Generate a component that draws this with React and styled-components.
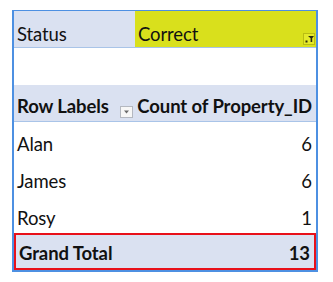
import React from 'react';
import styled, { createGlobalStyle } from 'styled-components';

const GlobalStyle = createGlobalStyle`
  body {
    margin: 0;
    background: #ffffff;
    font-family: Lato, "Liberation Sans", sans-serif;
  }
`;

const Page = styled.div`
  padding: 10px 0 0 12px;
`;

const Pivot = styled.div`
  width: 306px;
  box-sizing: border-box;
  border: 2px solid #4d90e2;
  border-top-width: 1px;
  display: flex;
  flex-direction: column;
`;

const Row = styled.div`
  display: grid;
  grid-template-columns: 121px 1fr;
  height: 37px;
  box-sizing: border-box;
  background: ${({ shaded }) => (shaded ? '#dae1f1' : '#ffffff')};
  border-bottom: ${({ ruled }) => (ruled ? '1px solid #a9c4e8' : 'none')};
  font-weight: ${({ bold }) => (bold ? 700 : 400)};
`;

const TotalRow = styled(Row)`
  border: 2px solid #e8101a;
`;

const Cell = styled.div`
  position: relative;
  display: flex;
  align-items: flex-end;
  justify-content: ${({ right }) => (right ? 'flex-end' : 'flex-start')};
  padding: 0 ${({ right }) => (right ? '4px' : '0')} ${({ low }) => (low ? '3px' : '5px')}
    ${({ right }) => (right ? '0' : '3px')};
  background: ${({ fill }) => fill || 'transparent'};
  font-size: 18.5px;
  line-height: 20px;
  letter-spacing: -0.1px;
  color: #111111;
  white-space: nowrap;
`;

const FilterButton = styled.span`
  position: absolute;
  right: 1px;
  bottom: 2px;
  width: 12px;
  height: 12px;
  box-sizing: border-box;
  border: 1px solid #b9bd14;
  background: #e4ea2a;
  display: flex;
  align-items: center;
  justify-content: center;
`;

const DropButton = styled.span`
  position: absolute;
  right: 2px;
  bottom: 3px;
  width: 13px;
  height: 12px;
  box-sizing: border-box;
  border: 1px solid #b4b8c0;
  background: #f7f7f7;
  display: flex;
  align-items: center;
  justify-content: center;
`;

const FunnelIcon = () => (
  <svg width="9" height="8" viewBox="0 0 9 8">
    <path d="M3 1h6L7.2 3.2V7H5.6V3.2z" fill="#2b2b10" />
    <rect x="0.5" y="5.5" width="2" height="2" fill="#2b2b10" />
  </svg>
);

const CaretIcon = () => (
  <svg width="7" height="4" viewBox="0 0 7 4">
    <path d="M1 0.5h5L3.5 3.5z" fill="#6a6a6a" />
  </svg>
);

const rows = [
  { name: 'Alan', count: 6 },
  { name: 'James', count: 6 },
  { name: 'Rosy', count: 1 },
];

const App = () => (
  <Page>
    <GlobalStyle />
    <Pivot>
      <Row ruled>
        <Cell low fill="#dae1f1">Status</Cell>
        <Cell low fill="#d9e01c">
          Correct
          <FilterButton>
            <FunnelIcon />
          </FilterButton>
        </Cell>
      </Row>
      <Row>
        <Cell />
        <Cell />
      </Row>
      <Row shaded ruled bold>
        <Cell>
          Row Labels
          <DropButton>
            <CaretIcon />
          </DropButton>
        </Cell>
        <Cell right>Count of Property_ID</Cell>
      </Row>
      {rows.map((r) => (
        <Row key={r.name}>
          <Cell>{r.name}</Cell>
          <Cell right>{r.count}</Cell>
        </Row>
      ))}
      <TotalRow shaded bold>
        <Cell>Grand Total</Cell>
        <Cell right>13</Cell>
      </TotalRow>
    </Pivot>
  </Page>
);

export default App;
